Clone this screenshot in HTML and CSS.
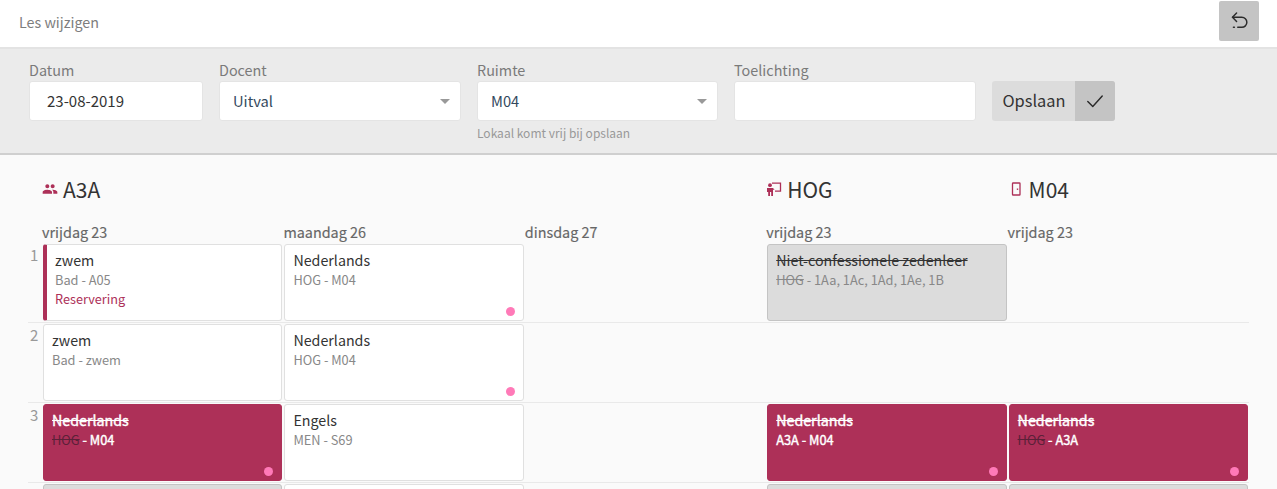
FILE: index.html
```html
<!DOCTYPE html>
<html lang="nl">
<head>
<meta charset="utf-8">
<title>Les wijzigen</title>
<link rel="stylesheet" href="styles.css">
</head>
<body>
<header class="topbar">
  <span class="topbar-title">Les wijzigen</span>
  <button class="undo" type="button" aria-label="Ongedaan maken">
    <svg width="21" height="21" viewBox="0 0 18 18" fill="none" stroke="#2b2b2b" stroke-width="1.25" stroke-linecap="round" stroke-linejoin="round"><path d="M6.5 1.800 3 5.400l3.500 3.600"/><path d="M3 5.400h8a4.300 4.300 0 0 1 0 8.600H7.500"/><path d="M3.800 14h.8"/></svg>
  </button>
</header>
<form class="panel">
  <div class="field field-date">
    <label class="label">Datum</label>
    <div class="input input-date">23-08-2019</div>
  </div>
  <div class="field field-docent">
    <label class="label">Docent</label>
    <div class="input input-select">Uitval<i class="caret"></i></div>
  </div>
  <div class="field field-ruimte">
    <label class="label">Ruimte</label>
    <div class="input input-select">M04<i class="caret"></i></div>
    <div class="hint">Lokaal komt vrij bij opslaan</div>
  </div>
  <div class="field field-note">
    <label class="label">Toelichting</label>
    <div class="input"></div>
  </div>
  <button class="save" type="button">
    <span class="save-text">Opslaan</span>
    <span class="save-icon"><svg width="20" height="20" viewBox="0 0 18 18" fill="none" stroke="#2b2b2b" stroke-width="1.3" stroke-linecap="round" stroke-linejoin="round"><path d="M2.500 9.500 7 14l8.500-9.500"/></svg></span>
  </button>
</form>
<main class="rooster">
  <div class="heads">
    <h2 class="head head-wide"><svg class="icon" width="16" height="16" viewBox="0 0 24 24" fill="#ad3058"><path d="M16 11c1.660 0 2.990-1.340 2.990-3S17.660 5 16 5s-3 1.340-3 3 1.340 3 3 3zm-8 0c1.660 0 2.990-1.340 2.990-3S9.660 5 8 5 5 6.340 5 8s1.340 3 3 3zm0 2c-2.330 0-7 1.170-7 3.500V19h14v-2.500C15 14.170 10.330 13 8 13zm8 0c-.29 0-.62.02-.97.05 1.160.84 1.970 1.970 1.970 3.450V19h6v-2.500c0-2.330-4.670-3.500-7-3.500z"/></svg>A3A</h2>
    <h2 class="head"><svg class="icon" width="16" height="16" viewBox="0 0 16 16"><circle cx="4" cy="4.200" r="1.900" fill="#ad3058"/><path d="M1 7h6l1.600 1.800H7V15H5.200v-4H4v4H2.200V11H1z" fill="#ad3058"/><path d="M6 2.200h8.500v8H9" fill="none" stroke="#ad3058" stroke-width="1.300"/></svg>HOG</h2>
    <h2 class="head"><svg class="icon" width="16" height="16" viewBox="0 0 16 16"><rect x="4.500" y="2" width="7.500" height="12" rx=".6" fill="none" stroke="#ad3058" stroke-width="1.300"/><rect x="8.800" y="7.500" width="1.400" height="1.400" fill="#ad3058"/></svg>M04</h2>
  </div>
  <div class="days">
    <span></span>
    <span>vrijdag 23</span><span>maandag 26</span><span>dinsdag 27</span><span>vrijdag 23</span><span>vrijdag 23</span>
  </div>
  <div class="row">
    <span class="num">1</span>
    <div class="card card-res"><div class="t">zwem</div><div class="s">Bad - A05</div><div class="r">Reservering</div></div>
    <div class="card"><div class="t">Nederlands</div><div class="s">HOG - M04</div><i class="dot"></i></div>
    <div></div>
    <div class="card card-grey"><div class="t"><s>Niet-confessionele zedenleer</s></div><div class="s"><s>HOG</s> - 1Aa, 1Ac, 1Ad, 1Ae, 1B</div></div>
    <div></div>
  </div>
  <div class="row">
    <span class="num">2</span>
    <div class="card"><div class="t">zwem</div><div class="s">Bad - zwem</div></div>
    <div class="card"><div class="t">Nederlands</div><div class="s">HOG - M04</div><i class="dot"></i></div>
    <div></div><div></div><div></div>
  </div>
  <div class="row">
    <span class="num">3</span>
    <div class="card card-red"><div class="t"><s>Nederlands</s></div><div class="s"><s class="old">HOG</s> - M04</div><i class="dot"></i></div>
    <div class="card"><div class="t">Engels</div><div class="s">MEN - S69</div></div>
    <div></div>
    <div class="card card-red"><div class="t"><s>Nederlands</s></div><div class="s">A3A - M04</div><i class="dot"></i></div>
    <div class="card card-red"><div class="t"><s>Nederlands</s></div><div class="s"><s class="old">HOG</s> - A3A</div><i class="dot"></i></div>
  </div>
  <div class="row">
    <span class="num"></span>
    <div class="card card-grey"></div>
    <div class="card"></div>
    <div></div>
    <div class="card card-grey"></div>
    <div class="card card-grey"></div>
  </div>
</main>
</body>
</html>
```
FILE: styles.css
```css
* { box-sizing: border-box; }
html, body { margin: 0; height: 100%; overflow: hidden; }
body {
  background: #fafafa;
  font-family: "Noto Sans CJK SC", "Noto Sans CJK JP", "Noto Sans", sans-serif;
  color: #333;
  font-size: 15px;
}
.topbar {
  height: 47px;
  background: #fff;
  display: flex;
  align-items: flex-start;
  justify-content: space-between;
  padding: 1px 18px 0 19px;
}
.topbar-title { font-size: 14.3px; line-height: 42px; color: #7d7d7d; }
.undo {
  width: 40px;
  height: 40px;
  border: 0;
  border-radius: 2px;
  background: #c4c4c4;
  padding: 0;
  display: flex;
  align-items: center;
  justify-content: center;
}
.panel {
  height: 108px;
  background: #ebebeb;
  border-top: 2px solid #e3e3e3;
  border-bottom: 2px solid #cfcfcf;
  padding: 11px 0 0 29px;
  display: flex;
  align-items: flex-start;
}
.field { margin-right: 16px; }
.field-date { width: 174px; }
.field-docent { width: 242px; }
.field-ruimte { width: 241px; }
.field-note { width: 242px; }
.label { display: block; font-size: 14.4px; line-height: 19px; margin-bottom: 2px; color: #7a7a7a; }
.input {
  height: 40px;
  background: #fff;
  border: 1px solid #e4e4e4;
  border-radius: 3px;
  font-size: 14.7px;
  line-height: 38px;
  padding: 0 13px;
  color: #34495e;
  position: relative;
}
.input-date { padding-left: 17px; color: #333; font-size: 15px; }
.caret {
  position: absolute;
  right: 10px;
  top: 17px;
  border: 5px solid transparent;
  border-top: 5px solid #999;
  border-bottom: 0;
}
.hint { font-size: 12px; line-height: 16px; margin-top: 4px; color: #999; }
.save {
  margin-top: 21px;
  height: 40px;
  width: 123px;
  padding: 0;
  border: 0;
  border-radius: 3px;
  background: #dcdcdc;
  display: flex;
  overflow: hidden;
  font: inherit;
  color: #333;
}
.save-text { flex: 1; line-height: 39px; font-size: 16.4px; text-align: center; padding-left: 1px; }
.save-icon { width: 40px; height: 40px; background: #c4c4c4; display: flex; align-items: center; justify-content: center; }
.rooster { padding-left: 28px; width: 1249px; }
.heads {
  display: grid;
  grid-template-columns: 14px repeat(5, 1fr);
  height: 68px;
  padding-top: 19px;
}
.heads::before { content: ""; }
.head {
  margin: 0;
  font-size: 21px;
  font-weight: 400;
  line-height: 30px;
  height: 30px;
  color: #333;
  display: flex;
  align-items: center;
  gap: 5px;
}
.head-wide { grid-column: span 3; }
.icon { flex: none; }
.days {
  display: grid;
  grid-template-columns: 14px repeat(5, 1fr);
  height: 20px;
  font-size: 14.4px;
  line-height: 18px;
  color: #666;
  -webkit-text-stroke: .15px #666;
}
.row {
  display: grid;
  grid-template-columns: 14px repeat(5, 1fr);
  height: 80px;
  padding: 1px 0;
  border-bottom: 1px solid #e9e9e9;
}
.num { font-size: 15px; line-height: 22px; color: #999; padding-left: 2px; }
.card {
  position: relative;
  height: 77px;
  margin: 0 1px;
  background: #fff;
  border: 1px solid #e0e0e0;
  border-radius: 3px;
  padding: 4px 8px;
}
.t { font-size: 14.25px; line-height: 22px; color: #333; }
.s { font-size: 12.8px; line-height: 18px; color: #888; }
.r { font-size: 12.7px; line-height: 20px; color: #ad3058; }
.card-res { border-left: 4px solid #ad3058; }
.card-grey { background: #dcdcdc; border-color: #c4c4c4; }
.card-red { background: #ad3058; border-color: #ad3058; }
.card-red .t, .card-red .s { color: #fff; -webkit-text-stroke: .4px #fff; }
.card-red .old { color: #5c2038; -webkit-text-stroke: 0; }
.dot {
  position: absolute;
  right: 8px;
  bottom: 4px;
  width: 9px;
  height: 9px;
  border-radius: 50%;
  background: #ff7ab8;
}
```
